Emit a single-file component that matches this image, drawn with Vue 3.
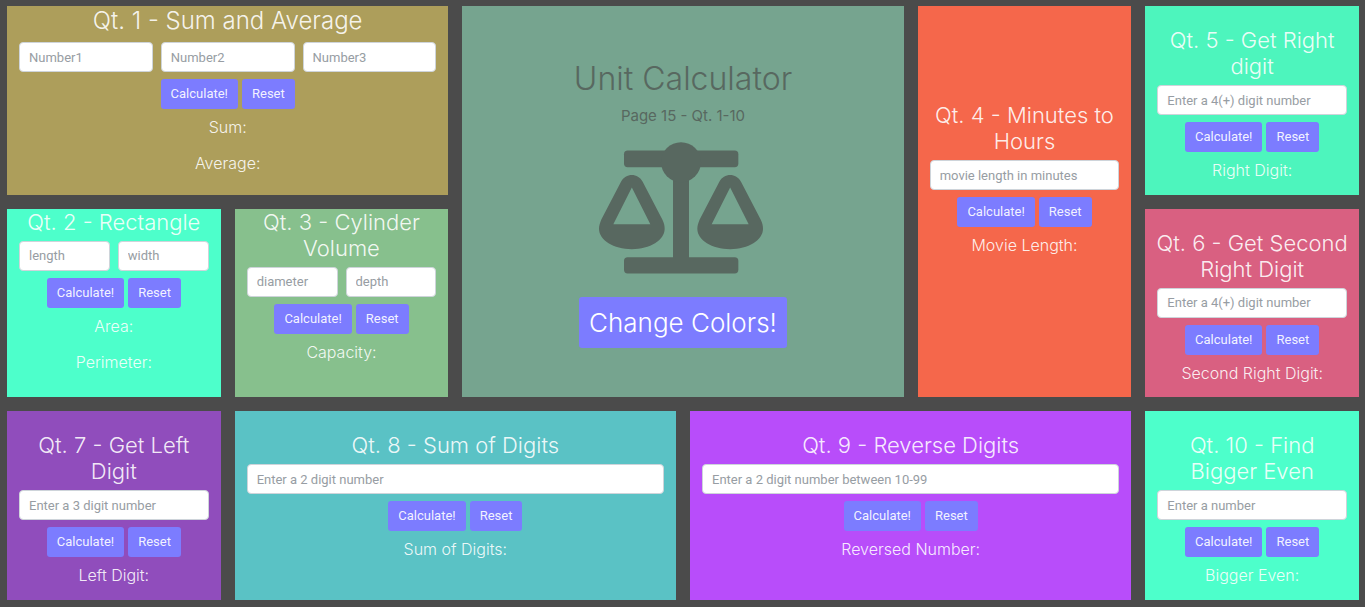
<script setup>
import { reactive } from 'vue'

const digits = (v) => String(Math.abs(Math.trunc(Number(v))))

const cards = reactive([
  {
    id: 'q1', tone: 'gold', title: 'Qt. 1 - Sum and Average',
    fields: ['Number1', 'Number2', 'Number3'], labels: ['Sum:', 'Average:'],
    solve: (a, b, c) => [a + b + c, (a + b + c) / 3]
  },
  {
    id: 'q2', tone: 'aqua', title: 'Qt. 2 - Rectangle',
    fields: ['length', 'width'], labels: ['Area:', 'Perimeter:'],
    solve: (a, b) => [a * b, 2 * (a + b)]
  },
  {
    id: 'q3', tone: 'leaf', title: 'Qt. 3 - Cylinder Volume',
    fields: ['diameter', 'depth'], labels: ['Capacity:'],
    solve: (d, h) => [(Math.PI * (d / 2) ** 2 * h).toFixed(2)]
  },
  {
    id: 'q4', tone: 'coral', title: 'Qt. 4 - Minutes to Hours',
    fields: ['movie length in minutes'], labels: ['Movie Length:'],
    solve: (m) => [`${Math.floor(m / 60)}h ${m % 60}m`]
  },
  {
    id: 'q5', tone: 'mint', title: 'Qt. 5 - Get Right digit',
    fields: ['Enter a 4(+) digit number'], labels: ['Right Digit:'],
    solve: (n) => [digits(n).at(-1)]
  },
  {
    id: 'q6', tone: 'rose', title: 'Qt. 6 - Get Second Right Digit',
    fields: ['Enter a 4(+) digit number'], labels: ['Second Right Digit:'],
    solve: (n) => [digits(n).at(-2)]
  },
  {
    id: 'q7', tone: 'plum', title: 'Qt. 7 - Get Left Digit',
    fields: ['Enter a 3 digit number'], labels: ['Left Digit:'],
    solve: (n) => [digits(n)[0]]
  },
  {
    id: 'q8', tone: 'teal', title: 'Qt. 8 - Sum of Digits',
    fields: ['Enter a 2 digit number'], labels: ['Sum of Digits:'],
    solve: (n) => [[...digits(n)].reduce((s, d) => s + Number(d), 0)]
  },
  {
    id: 'q9', tone: 'violet', title: 'Qt. 9 - Reverse Digits',
    fields: ['Enter a 2 digit number between 10-99'], labels: ['Reversed Number:'],
    solve: (n) => [[...digits(n)].reverse().join('')]
  },
  {
    id: 'q10', tone: 'aqua', title: 'Qt. 10 - Find Bigger Even',
    fields: ['Enter a number'], labels: ['Bigger Even:'],
    solve: (n) => [n % 2 === 0 ? n + 2 : n + 1]
  }
].map((c) => ({ ...c, values: c.fields.map(() => ''), results: [], color: null })))

function calculate(card) {
  card.results = card.solve(...card.values.map(Number))
}

function reset(card) {
  card.values = card.fields.map(() => '')
  card.results = []
}

function changeColors() {
  for (const card of cards) {
    card.color = `hsl(${Math.floor(Math.random() * 360)} 60% 60%)`
  }
}
</script>

<template>
  <main class="board">
    <form
      v-for="card in cards"
      :key="card.id"
      class="card"
      :class="[card.id, card.tone]"
      :style="card.color ? { backgroundColor: card.color } : null"
      @submit.prevent="calculate(card)"
      @reset.prevent="reset(card)"
    >
      <h2 class="title">{{ card.title }}</h2>
      <div class="fields">
        <input
          v-for="(field, i) in card.fields"
          :key="i"
          v-model="card.values[i]"
          class="field"
          type="text"
          inputmode="numeric"
          :placeholder="field"
          :aria-label="field"
        />
      </div>
      <div class="actions">
        <button class="btn" type="submit">Calculate!</button>
        <button class="btn" type="reset">Reset</button>
      </div>
      <p v-for="(label, i) in card.labels" :key="label" class="result">
        {{ label }} <output v-if="card.results.length">{{ card.results[i] }}</output>
      </p>
    </form>

    <section class="hero">
      <h1 class="hero-title">Unit Calculator</h1>
      <p class="hero-sub">Page 15 - Qt. 1-10</p>
      <svg class="scales" viewBox="117 276 492 395" aria-hidden="true">
        <rect x="192" y="301" width="343" height="50" rx="11" />
        <rect x="192" y="621" width="343" height="49" rx="11" />
        <rect x="339" y="340" width="48" height="300" />
        <circle cx="363" cy="336" r="60" />
        <path
          id="pan"
          fill-rule="evenodd"
          d="M183 395C197 368 234 368 248 395L307 508C312 518 314 526 314 536C314 570 270 597 215.500 597C161 597 117 570 117 536C117 526 120 518 124 508ZM215.500 412L160 522H271Z"
        />
        <use href="#pan" x="295" />
      </svg>
      <button class="btn btn-big" type="button" @click="changeColors">Change Colors!</button>
    </section>
  </main>
</template>

<style>
body {
  margin: 0;
  background: #4b4b4b;
}
</style>

<style scoped>
.board {
  box-sizing: border-box;
  min-height: 100vh;
  padding: 6px 6px 7px 7px;
  display: grid;
  grid-template-columns: repeat(6, minmax(0, 1fr));
  grid-template-rows: repeat(3, minmax(0, 1fr));
  grid-template-areas:
    'q1 q1 hero hero q4 q5'
    'q2 q3 hero hero q4 q6'
    'q7 q8 q8 q9 q9 q10';
  gap: 14px;
  background: #4b4b4b;
  font-family: Inter, Roboto, sans-serif;
  color: rgba(255, 255, 255, 0.9);
  text-align: center;
}

.card {
  box-sizing: border-box;
  min-width: 0;
  padding: 21px 12px 0;
}

.q1 { grid-area: q1; padding-top: 0; }
.q2 { grid-area: q2; padding-top: 0; }
.q3 { grid-area: q3; padding-top: 0; }
.q4 { grid-area: q4; padding-top: 96px; }
.q5 { grid-area: q5; }
.q6 { grid-area: q6; }
.q7 { grid-area: q7; }
.q8 { grid-area: q8; }
.q9 { grid-area: q9; }
.q10 { grid-area: q10; }

.gold { background: #ad9e5b; }
.aqua { background: #4dffcb; }
.leaf { background: #87c08d; }
.coral { background: #f5674b; }
.mint { background: #4df5bd; }
.rose { background: #d96081; }
.plum { background: #904dbc; }
.teal { background: #5ac2c5; }
.violet { background: #b84dfa; }

.title {
  margin: 0 -2px 6px;
  font-size: 22px;
  font-weight: 300;
  line-height: 26px;
}

.q1 .title {
  font-size: 24px;
  line-height: 30px;
}

.fields {
  display: flex;
  gap: 8px;
}

.field {
  box-sizing: border-box;
  flex: 1;
  min-width: 0;
  width: 100%;
  height: 30px;
  padding: 4px 9px;
  border: 1px solid #ced4da;
  border-radius: 4px;
  background: #fff;
  color: #495057;
  font-family: Roboto, sans-serif;
  font-size: 13px;
  line-height: 20px;
}

.field::placeholder {
  color: #979da3;
  opacity: 1;
}

.actions {
  display: flex;
  justify-content: center;
  gap: 4px;
  margin: 7px 0 6px;
}

.btn {
  height: 30px;
  padding: 0 10px;
  border: 0;
  border-radius: 3px;
  background: #7c7cff;
  color: rgba(255, 255, 255, 0.92);
  font-family: Roboto, sans-serif;
  font-size: 13px;
  line-height: 20px;
}

.result {
  margin: 0 0 12px;
  font-size: 16px;
  font-weight: 300;
  line-height: 24px;
}

.hero {
  grid-area: hero;
  display: flex;
  flex-direction: column;
  align-items: center;
  justify-content: center;
  padding-top: 5px;
  background: #76a48f;
  color: #586860;
}

.hero-title {
  margin: 0 0 6px;
  font-size: 32px;
  font-weight: 300;
  line-height: 38px;
}

.hero-sub {
  margin: 0 0 14px;
  font-size: 15px;
  line-height: 24px;
}

.scales {
  width: 164px;
  height: 132px;
  margin: 0 4px 23px 0;
  fill: #586860;
}

.btn-big {
  height: 51px;
  color: #fff;
  font-family: Inter, Roboto, sans-serif;
  font-size: 26px;
  font-weight: 300;
  line-height: 40px;
}
</style>
